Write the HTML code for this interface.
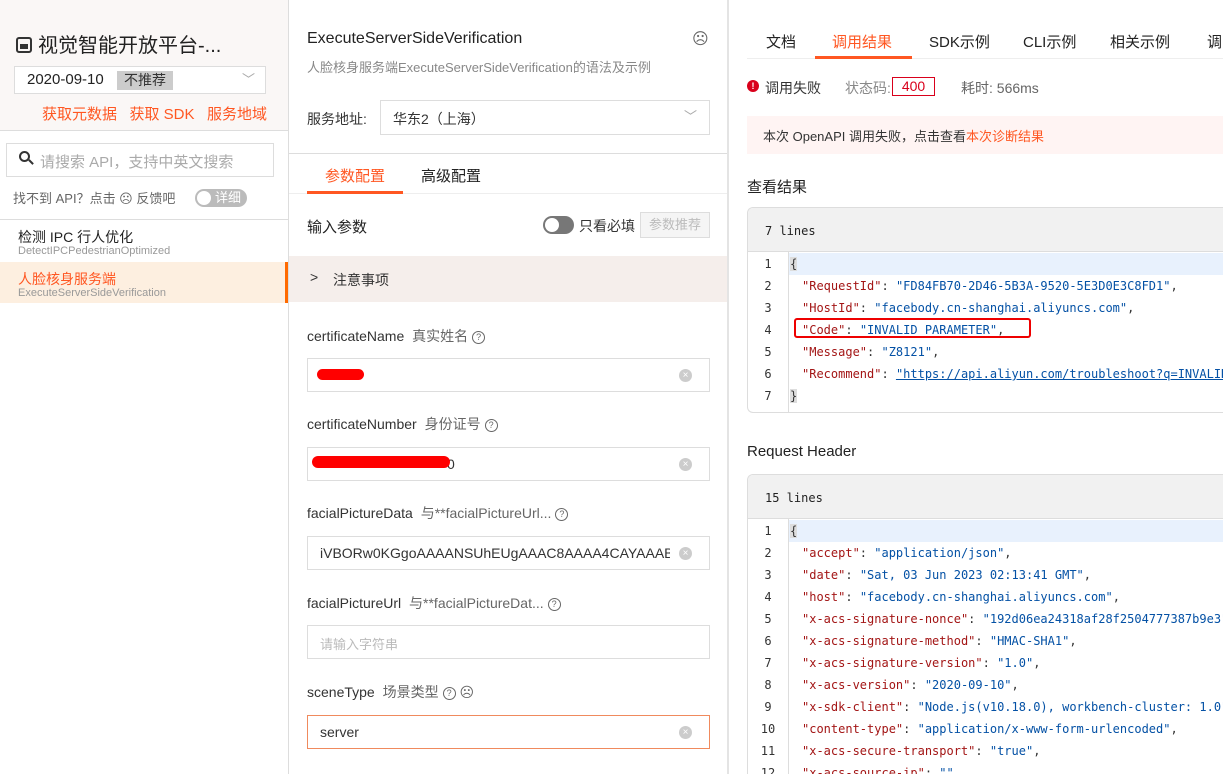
<!DOCTYPE html><html><head><meta charset="utf-8"><style>
*{box-sizing:border-box;margin:0;padding:0}
html,body{width:1223px;height:774px;overflow:hidden}
body{position:relative;background:#fff;font-family:"Liberation Sans","Noto Sans CJK SC",sans-serif;color:#333;font-size:14px}
.a{position:absolute;white-space:nowrap}
.mono{font-family:"DejaVu Sans Mono","Liberation Mono",monospace;font-size:12px}
.inp{position:absolute;left:307px;width:403px;height:34px;border:1px solid #ddd;background:#fff;overflow:hidden}
.x{position:absolute;right:17px;top:10px;width:13px;height:13px;border-radius:50%;background:#ccc;color:#fff;font-size:10px;line-height:13px;text-align:center}
.q{display:inline-block;width:13px;height:13px;border:1.3px solid #666;border-radius:50%;font-size:9px;line-height:11px;text-align:center;color:#666;vertical-align:1px;margin-left:4px}
.k{color:#a31515}.s{color:#0451a5}
.ln{position:absolute;left:0;width:40px;text-align:center;color:#333}
</style></head><body>
<div class="a" style="left:0;top:0;width:288px;height:130px;background:#faf7f6"></div>
<div class="a" style="left:0;top:130px;width:288px;height:1px;background:#ddd"></div>
<div class="a" style="left:16px;top:29px;font-size:20px;color:#222"><span style="display:inline-block;width:16px;height:16px;border:2px solid #333;border-radius:3px;vertical-align:-1px;margin-right:6px;position:relative"><span style="position:absolute;left:2px;top:5px;width:8px;height:5px;background:#333"></span></span>视觉智能开放平台-...</div>
<div class="a" style="left:14px;top:66px;width:252px;height:28px;border:1px solid #ddd;background:#fff"></div>
<div class="a" style="left:27px;top:71px;font-size:15px;color:#222">2020-09-10</div>
<div class="a" style="left:117px;top:71px;width:56px;height:19px;background:#ccc;font-size:14px;text-align:center;line-height:19px;color:#333">不推荐</div>
<div class="a" style="left:242px;top:69px;color:#aaa;font-size:13px">﹀</div>
<div class="a" style="left:42px;top:103px;color:#ff5722;font-size:15px">获取元数据&nbsp;&nbsp;&nbsp;获取 SDK&nbsp;&nbsp;&nbsp;服务地域</div>
<div class="a" style="left:6px;top:143px;width:268px;height:34px;border:1px solid #ddd"></div>
<div class="a" style="left:19px;top:151px;width:11px;height:11px;border:2px solid #333;border-radius:50%"></div>
<div class="a" style="left:28px;top:161px;width:6px;height:2px;background:#333;transform:rotate(45deg)"></div>
<div class="a" style="left:40px;top:151px;color:#aaa;font-size:15px">请搜索 API，支持中英文搜索</div>
<div class="a" style="left:13px;top:188px;color:#666;font-size:13px">找不到 API？点击 ☹ 反馈吧</div>
<div class="a" style="left:195px;top:189px;width:52px;height:18px;border-radius:9px;background:#bbb;color:#fff;font-size:13px;line-height:18px;padding-left:20px">详细</div>
<div class="a" style="left:197px;top:191px;width:14px;height:14px;border-radius:50%;background:#fff"></div>
<div class="a" style="left:0;top:219px;width:288px;height:1px;background:#ddd"></div>
<div class="a" style="left:18px;top:228px;font-size:14px;line-height:18px;color:#222">检测 IPC 行人优化</div>
<div class="a" style="left:18px;top:245px;font-size:11px;line-height:13px;color:#999">DetectIPCPedestrianOptimized</div>
<div class="a" style="left:0;top:262px;width:288px;height:41px;background:#fdefe0"></div>
<div class="a" style="left:285px;top:262px;width:3px;height:41px;background:#ff6a00"></div>
<div class="a" style="left:18px;top:270px;font-size:14px;line-height:18px;color:#ff5722">人脸核身服务端</div>
<div class="a" style="left:18px;top:287px;font-size:11px;line-height:13px;color:#999">ExecuteServerSideVerification</div>
<div class="a" style="left:288px;top:0;width:1px;height:774px;background:#ddd"></div>
<div class="a" style="left:307px;top:30px;font-size:16px;color:#222">ExecuteServerSideVerification</div>
<div class="a" style="left:692px;top:29px;font-size:16px;color:#666">☹</div>
<div class="a" style="left:307px;top:57px;font-size:13px;color:#888">人脸核身服务端ExecuteServerSideVerification的语法及示例</div>
<div class="a" style="left:307px;top:109px;color:#333">服务地址:</div>
<div class="a" style="left:380px;top:100px;width:330px;height:35px;border:1px solid #ddd"></div>
<div class="a" style="left:393px;top:109px;color:#333">华东2（上海）</div>
<div class="a" style="left:684px;top:106px;color:#aaa;font-size:13px">﹀</div>
<div class="a" style="left:289px;top:153px;width:438px;height:1px;background:#ddd"></div>
<div class="a" style="left:325px;top:165px;font-size:15px;color:#ff5722">参数配置</div>
<div class="a" style="left:421px;top:165px;font-size:15px;color:#222">高级配置</div>
<div class="a" style="left:289px;top:193px;width:438px;height:1px;background:#eee"></div>
<div class="a" style="left:307px;top:191px;width:96px;height:3px;background:#ff5722"></div>
<div class="a" style="left:307px;top:216px;font-size:15px;color:#222">输入参数</div>
<div class="a" style="left:543px;top:216px;width:31px;height:18px;border-radius:9px;background:#777"></div>
<div class="a" style="left:545px;top:218px;width:14px;height:14px;border-radius:50%;background:#fff"></div>
<div class="a" style="left:579px;top:216px;font-size:14px;color:#333">只看必填</div>
<div class="a" style="left:640px;top:212px;width:70px;height:26px;border:1px solid #ddd;background:#f5f5f5;color:#bbb;font-size:13px;text-align:center;line-height:24px">参数推荐</div>
<div class="a" style="left:289px;top:256px;width:438px;height:46px;background:#f5eeeb"></div>
<div class="a" style="left:310px;top:269px;color:#333">&gt;</div>
<div class="a" style="left:333px;top:270px;color:#333">注意事项</div>
<div class="a" style="left:307px;top:326px;color:#333">certificateName <span style="color:#666;margin-left:4px">真实姓名</span><span class="q">?</span></div>
<div class="inp" style="top:358px"><div class="x">×</div></div>
<div class="a" style="left:317px;top:369px;width:47px;height:11px;border-radius:6px;background:#f00"></div>
<div class="a" style="left:307px;top:414px;color:#333">certificateNumber <span style="color:#666;margin-left:4px">身份证号</span><span class="q">?</span></div>
<div class="inp" style="top:447px"><div class="x">×</div></div>
<div class="a" style="left:447px;top:456px;color:#333">0</div>
<div class="a" style="left:312px;top:456px;width:138px;height:12px;border-radius:6px;background:#f00"></div>
<div class="a" style="left:307px;top:503px;color:#333">facialPictureData <span style="color:#666;margin-left:4px">与**facialPictureUrl...</span><span class="q">?</span></div>
<div class="inp" style="top:536px"><div class="a" style="left:12px;top:8px;font-size:14px;width:350px;overflow:hidden">iVBORw0KGgoAAAANSUhEUgAAAC8AAAA4CAYAAABt9KGPA</div><div class="x">×</div></div>
<div class="a" style="left:307px;top:593px;color:#333">facialPictureUrl <span style="color:#666;margin-left:4px">与**facialPictureDat...</span><span class="q">?</span></div>
<div class="inp" style="top:625px"><div class="a" style="left:12px;top:8px;color:#bbb;font-size:13px">请输入字符串</div></div>
<div class="a" style="left:307px;top:682px;color:#333">sceneType <span style="color:#666;margin-left:4px">场景类型</span><span class="q">?</span> <span style="color:#666">☹</span></div>
<div class="inp" style="top:715px;border-color:#f08a5d"><div class="a" style="left:12px;top:8px">server</div><div class="x">×</div></div>
<div class="a" style="left:727px;top:0;width:2px;height:774px;background:#e4e4e4"></div>
<div class="a" style="left:766px;top:31px;font-size:15px;color:#222">文档</div>
<div class="a" style="left:832px;top:31px;font-size:15px;color:#ff5722">调用结果</div>
<div class="a" style="left:929px;top:31px;font-size:15px;color:#222">SDK示例</div>
<div class="a" style="left:1023px;top:31px;font-size:15px;color:#222">CLI示例</div>
<div class="a" style="left:1110px;top:31px;font-size:15px;color:#222">相关示例</div>
<div class="a" style="left:1207px;top:31px;font-size:15px;color:#222">调</div>
<div class="a" style="left:747px;top:58px;width:476px;height:1px;background:#eee"></div>
<div class="a" style="left:815px;top:56px;width:97px;height:3px;background:#ff5722"></div>
<div class="a" style="left:747px;top:80px;width:12px;height:12px;border-radius:50%;background:#d9001b;color:#fff;font-size:9px;line-height:12px;text-align:center;font-weight:bold">!</div>
<div class="a" style="left:765px;top:78px;font-size:14px;color:#333">调用失败</div>
<div class="a" style="left:845px;top:78px;font-size:14px;color:#888">状态码:</div>
<div class="a" style="left:892px;top:77px;width:43px;height:19px;border:1px solid #d9001b;color:#d9001b;text-align:center;line-height:17px;font-size:14px">400</div>
<div class="a" style="left:961px;top:78px;font-size:14px;color:#666">耗时: 566ms</div>
<div class="a" style="left:747px;top:116px;width:476px;height:38px;background:#fff4f3"></div>
<div class="a" style="left:763px;top:126px;font-size:13px;color:#333">本次 OpenAPI 调用失败，点击查看<span style="color:#ff5722">本次诊断结果</span></div>
<div class="a" style="left:747px;top:176px;font-size:15px;color:#222">查看结果</div>
<div class="a" style="left:747px;top:207px;width:476px;height:206px;border:1px solid #ddd;border-right:none;border-radius:6px 0 0 6px;overflow:hidden">
<div style="position:absolute;left:0;top:0;width:100%;height:44px;background:#f1f1f1;border-bottom:1px solid #ddd"></div>
<div class="a mono" style="left:17px;top:16px;color:#222">7 lines</div>
<div style="position:absolute;left:40px;top:44px;width:1px;height:162px;background:#ddd"></div>
<div style="position:absolute;left:41px;top:45px;width:100%;height:22px;background:#e8f1fd"></div>
<div class="mono" style="position:absolute;left:0;top:45px;line-height:22px;width:100%">
<div style="position:relative;height:22px"><span class="ln">1</span><span class="a" style="left:42px"><span style="background:#ddd">{</span></span></div>
<div style="position:relative;height:22px"><span class="ln">2</span><span class="a" style="left:54px"><span class="k">"RequestId"</span>: <span class="s">"FD84FB70-2D46-5B3A-9520-5E3D0E3C8FD1"</span>,</span></div>
<div style="position:relative;height:22px"><span class="ln">3</span><span class="a" style="left:54px"><span class="k">"HostId"</span>: <span class="s">"facebody.cn-shanghai.aliyuncs.com"</span>,</span></div>
<div style="position:relative;height:22px"><span class="ln">4</span><span class="a" style="left:54px"><span class="k">"Code"</span>: <span class="s">"INVALID_PARAMETER"</span>,</span></div>
<div style="position:relative;height:22px"><span class="ln">5</span><span class="a" style="left:54px"><span class="k">"Message"</span>: <span class="s">"Z8121"</span>,</span></div>
<div style="position:relative;height:22px"><span class="ln">6</span><span class="a" style="left:54px"><span class="k">"Recommend"</span>: <span class="s" style="text-decoration:underline">"https://api.aliyun.com/troubleshoot?q=INVALID_PARAMETER</span></span></div>
<div style="position:relative;height:22px"><span class="ln">7</span><span class="a" style="left:42px"><span style="background:#ddd">}</span></span></div>
</div></div>
<div class="a" style="left:794px;top:318px;width:237px;height:20px;border:2.5px solid #e00;border-radius:3px"></div>
<div class="a" style="left:747px;top:443px;font-size:15px;color:#222">Request Header</div>
<div class="a" style="left:747px;top:474px;width:476px;height:300px;border-left:1px solid #ddd;border-top:1px solid #ddd;border-radius:6px 0 0 0;overflow:hidden">
<div style="position:absolute;left:0;top:0;width:100%;height:44px;background:#f1f1f1;border-bottom:1px solid #ddd"></div>
<div class="a mono" style="left:17px;top:16px;color:#222">15 lines</div>
<div style="position:absolute;left:40px;top:44px;width:1px;height:300px;background:#ddd"></div>
<div style="position:absolute;left:41px;top:45px;width:100%;height:22px;background:#e8f1fd"></div>
<div class="mono" style="position:absolute;left:0;top:45px;line-height:22px;width:100%">
<div style="position:relative;height:22px"><span class="ln">1</span><span class="a" style="left:42px"><span style="background:#ddd">{</span></span></div>
<div style="position:relative;height:22px"><span class="ln">2</span><span class="a" style="left:54px"><span class="k">"accept"</span>: <span class="s">"application/json"</span>,</span></div>
<div style="position:relative;height:22px"><span class="ln">3</span><span class="a" style="left:54px"><span class="k">"date"</span>: <span class="s">"Sat, 03 Jun 2023 02:13:41 GMT"</span>,</span></div>
<div style="position:relative;height:22px"><span class="ln">4</span><span class="a" style="left:54px"><span class="k">"host"</span>: <span class="s">"facebody.cn-shanghai.aliyuncs.com"</span>,</span></div>
<div style="position:relative;height:22px"><span class="ln">5</span><span class="a" style="left:54px"><span class="k">"x-acs-signature-nonce"</span>: <span class="s">"192d06ea24318af28f2504777387b9e3"</span>,</span></div>
<div style="position:relative;height:22px"><span class="ln">6</span><span class="a" style="left:54px"><span class="k">"x-acs-signature-method"</span>: <span class="s">"HMAC-SHA1"</span>,</span></div>
<div style="position:relative;height:22px"><span class="ln">7</span><span class="a" style="left:54px"><span class="k">"x-acs-signature-version"</span>: <span class="s">"1.0"</span>,</span></div>
<div style="position:relative;height:22px"><span class="ln">8</span><span class="a" style="left:54px"><span class="k">"x-acs-version"</span>: <span class="s">"2020-09-10"</span>,</span></div>
<div style="position:relative;height:22px"><span class="ln">9</span><span class="a" style="left:54px"><span class="k">"x-sdk-client"</span>: <span class="s">"Node.js(v10.18.0), workbench-cluster: 1.0"</span>,</span></div>
<div style="position:relative;height:22px"><span class="ln">10</span><span class="a" style="left:54px"><span class="k">"content-type"</span>: <span class="s">"application/x-www-form-urlencoded"</span>,</span></div>
<div style="position:relative;height:22px"><span class="ln">11</span><span class="a" style="left:54px"><span class="k">"x-acs-secure-transport"</span>: <span class="s">"true"</span>,</span></div>
<div style="position:relative;height:22px"><span class="ln">12</span><span class="a" style="left:54px"><span class="k">"x-acs-source-ip"</span>: <span class="s">""</span>,</span></div>
</div></div>
</body></html>
